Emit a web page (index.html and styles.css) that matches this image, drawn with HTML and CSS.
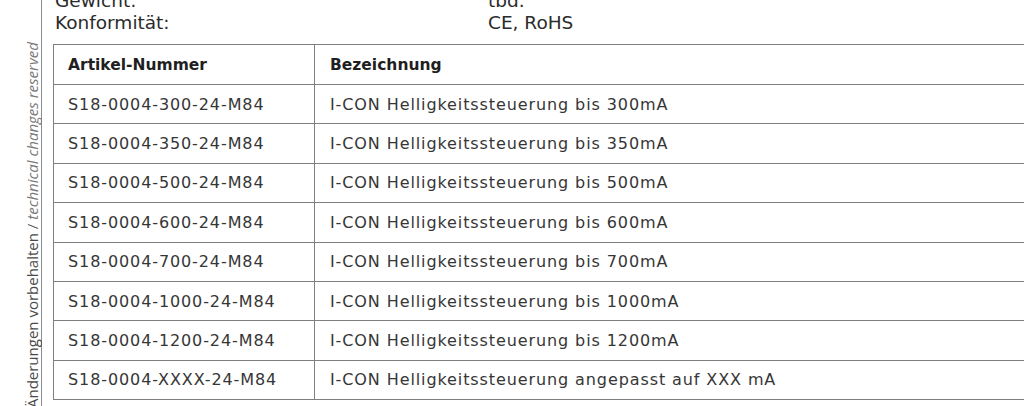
FILE: index.html
```html
<!DOCTYPE html>
<html lang="de">
<head>
<meta charset="utf-8">
<title>I-CON Helligkeitssteuerung</title>
<link rel="stylesheet" href="styles.css">
</head>
<body>
<div class="page">
  <aside class="margin">
    <div class="note"><span class="de">Änderungen vorbehalten</span> / <span class="en">technical changes reserved</span></div>
  </aside>
  <main class="content">
    <dl class="specs">
      <dt>Gewicht:</dt><dd>tbd.</dd>
      <dt>Konformität:</dt><dd>CE, RoHS</dd>
    </dl>
    <table class="articles">
      <thead>
        <tr><th class="c1">Artikel-Nummer</th><th class="c2">Bezeichnung</th></tr>
      </thead>
      <tbody>
        <tr><td class="c1">S18-0004-300-24-M84</td><td class="c2">I-CON Helligkeitssteuerung bis 300mA</td></tr>
        <tr><td class="c1">S18-0004-350-24-M84</td><td class="c2">I-CON Helligkeitssteuerung bis 350mA</td></tr>
        <tr><td class="c1">S18-0004-500-24-M84</td><td class="c2">I-CON Helligkeitssteuerung bis 500mA</td></tr>
        <tr><td class="c1">S18-0004-600-24-M84</td><td class="c2">I-CON Helligkeitssteuerung bis 600mA</td></tr>
        <tr><td class="c1">S18-0004-700-24-M84</td><td class="c2">I-CON Helligkeitssteuerung bis 700mA</td></tr>
        <tr><td class="c1">S18-0004-1000-24-M84</td><td class="c2">I-CON Helligkeitssteuerung bis 1000mA</td></tr>
        <tr><td class="c1">S18-0004-1200-24-M84</td><td class="c2">I-CON Helligkeitssteuerung bis 1200mA</td></tr>
        <tr><td class="c1">S18-0004-XXXX-24-M84</td><td class="c2">I-CON Helligkeitssteuerung angepasst auf XXX mA</td></tr>
      </tbody>
    </table>
  </main>
</div>
</body>
</html>
```

FILE: styles.css
```css
* { box-sizing: border-box; }
html, body {
  margin: 0;
  padding: 0;
  background: #ffffff;
  overflow: hidden;
}
body {
  font-family: "DejaVu Sans", "Open Sans", sans-serif;
  color: #2b2b2b;
  width: 1024px;
  height: 406px;
}
.page {
  display: flex;
  height: 406px;
}
.margin {
  flex: 0 0 42px;
  width: 42px;
  border-right: 1px solid #8c8c8c;
  display: flex;
  justify-content: flex-end;
  align-items: flex-end;
  padding-right: 1px;
  margin-bottom: -2px;
}
.note {
  writing-mode: vertical-rl;
  transform: rotate(180deg);
  font-family: "Open Sans", sans-serif;
  font-size: 15px;
  line-height: 16px;
  color: #4a4a4a;
  white-space: nowrap;
}
.note .en {
  font-style: italic;
  color: #7a7a7a;
}
.content {
  flex: 1 1 auto;
  padding-left: 11px;
  min-width: 0;
}
.specs {
  display: grid;
  grid-template-columns: 433px auto;
  margin: -10px 0 0 2px;
  font-size: 18.5px;
  line-height: 22px;
  color: #2b2b2b;
}
.specs dt, .specs dd { margin: 0; }
.articles {
  margin-top: 10px;
  width: 1000px;
  border-collapse: collapse;
  font-size: 16px;
  letter-spacing: 0.9px;
  color: #363636;
}
.articles th, .articles td {
  border: 1px solid #7f7f7f;
  text-align: left;
  vertical-align: middle;
  padding: 0;
  white-space: nowrap;
}
.articles th {
  font-size: 15.5px;
  font-weight: 700;
  letter-spacing: 0;
  color: #1f1f1f;
  height: 40px;
}
.articles td { height: 39.4px; }
.articles .c1 { width: 261px; padding-left: 14px; }
.articles .c2 { padding-left: 15px; }
```
